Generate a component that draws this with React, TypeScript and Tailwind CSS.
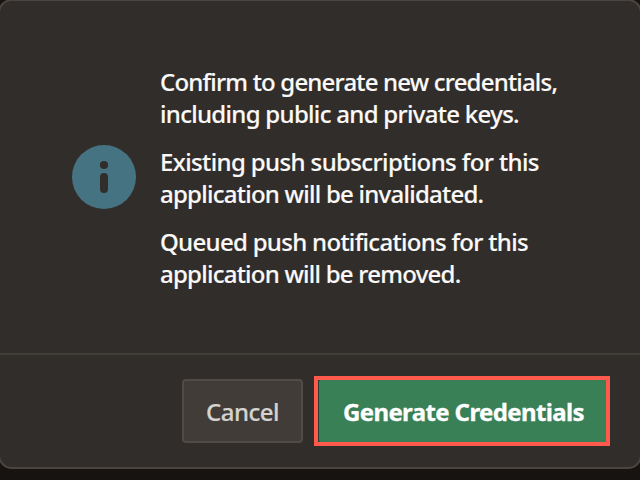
import type { ReactNode } from 'react';

function InfoIcon() {
  return (
    <svg className="mb-px size-16 shrink-0" viewBox="0 0 64 64" aria-hidden="true">
      <circle cx="32" cy="32" r="32" fill="#457382" />
      <circle cx="32" cy="20" r="4.1" fill="#312d2a" />
      <rect x="28" y="28" width="8" height="20" rx="4" fill="#312d2a" />
    </svg>
  );
}

function Line({ children, className }: { children: ReactNode; className: string }) {
  return <span className={`block whitespace-nowrap ${className}`}>{children}</span>;
}

export default function App() {
  return (
    <main className="h-[480px] w-[640px] overflow-hidden bg-[#161311] font-['Noto_Sans','Open_Sans',sans-serif]">
      <section
        role="dialog"
        className="-mx-0.5 -mt-px flex h-[470px] w-[644px] flex-col overflow-hidden rounded-[14px] border-2 border-[#4a4541] bg-[#312d2a]"
      >
        <div className="flex h-[352px] shrink-0 items-center gap-6 pl-[72px]">
          <InfoIcon />
          <div className="flex flex-col gap-4 pt-px text-[24px] leading-8 font-medium text-[#fbf9f8] [-webkit-text-stroke:0.15px_#fbf9f8]">
            <p>
              <Line className="tracking-[-0.81px]">Confirm to generate new credentials,</Line>
              <Line className="tracking-[-0.7px]">including public and private keys.</Line>
            </p>
            <p>
              <Line className="tracking-[-0.62px]">Existing push subscriptions for this</Line>
              <Line className="tracking-[-0.75px]">application will be invalidated.</Line>
            </p>
            <p>
              <Line className="tracking-[-0.7px]">Queued push notifications for this</Line>
              <Line className="tracking-[-0.76px]">application will be removed.</Line>
            </p>
          </div>
        </div>
        <footer className="flex grow items-start justify-end gap-[11px] border-t-2 border-[#403c38] pt-[21px] pr-[30px]">
          <button className="mt-[3px] h-16 w-[121px] rounded-[4px] border-2 border-[#504b47] bg-[#413c38] pt-0.5 text-[24px] font-medium tracking-[-0.5px] text-[#d5d3d0] [-webkit-text-stroke:0.2px_#d5d3d0]">
            Cancel
          </button>
          <div className="h-[70px] w-[296px] border-4 border-[#ff5a4b] bg-[#24402f] pl-px">
            <button className="h-full w-full rounded-l-[2px] bg-[#398057] pt-0.5 pl-0.5 text-[24px] font-bold tracking-[-0.62px] whitespace-nowrap text-white [-webkit-text-stroke:0.3px_white]">
              Generate Credentials
            </button>
          </div>
        </footer>
      </section>
    </main>
  );
}
